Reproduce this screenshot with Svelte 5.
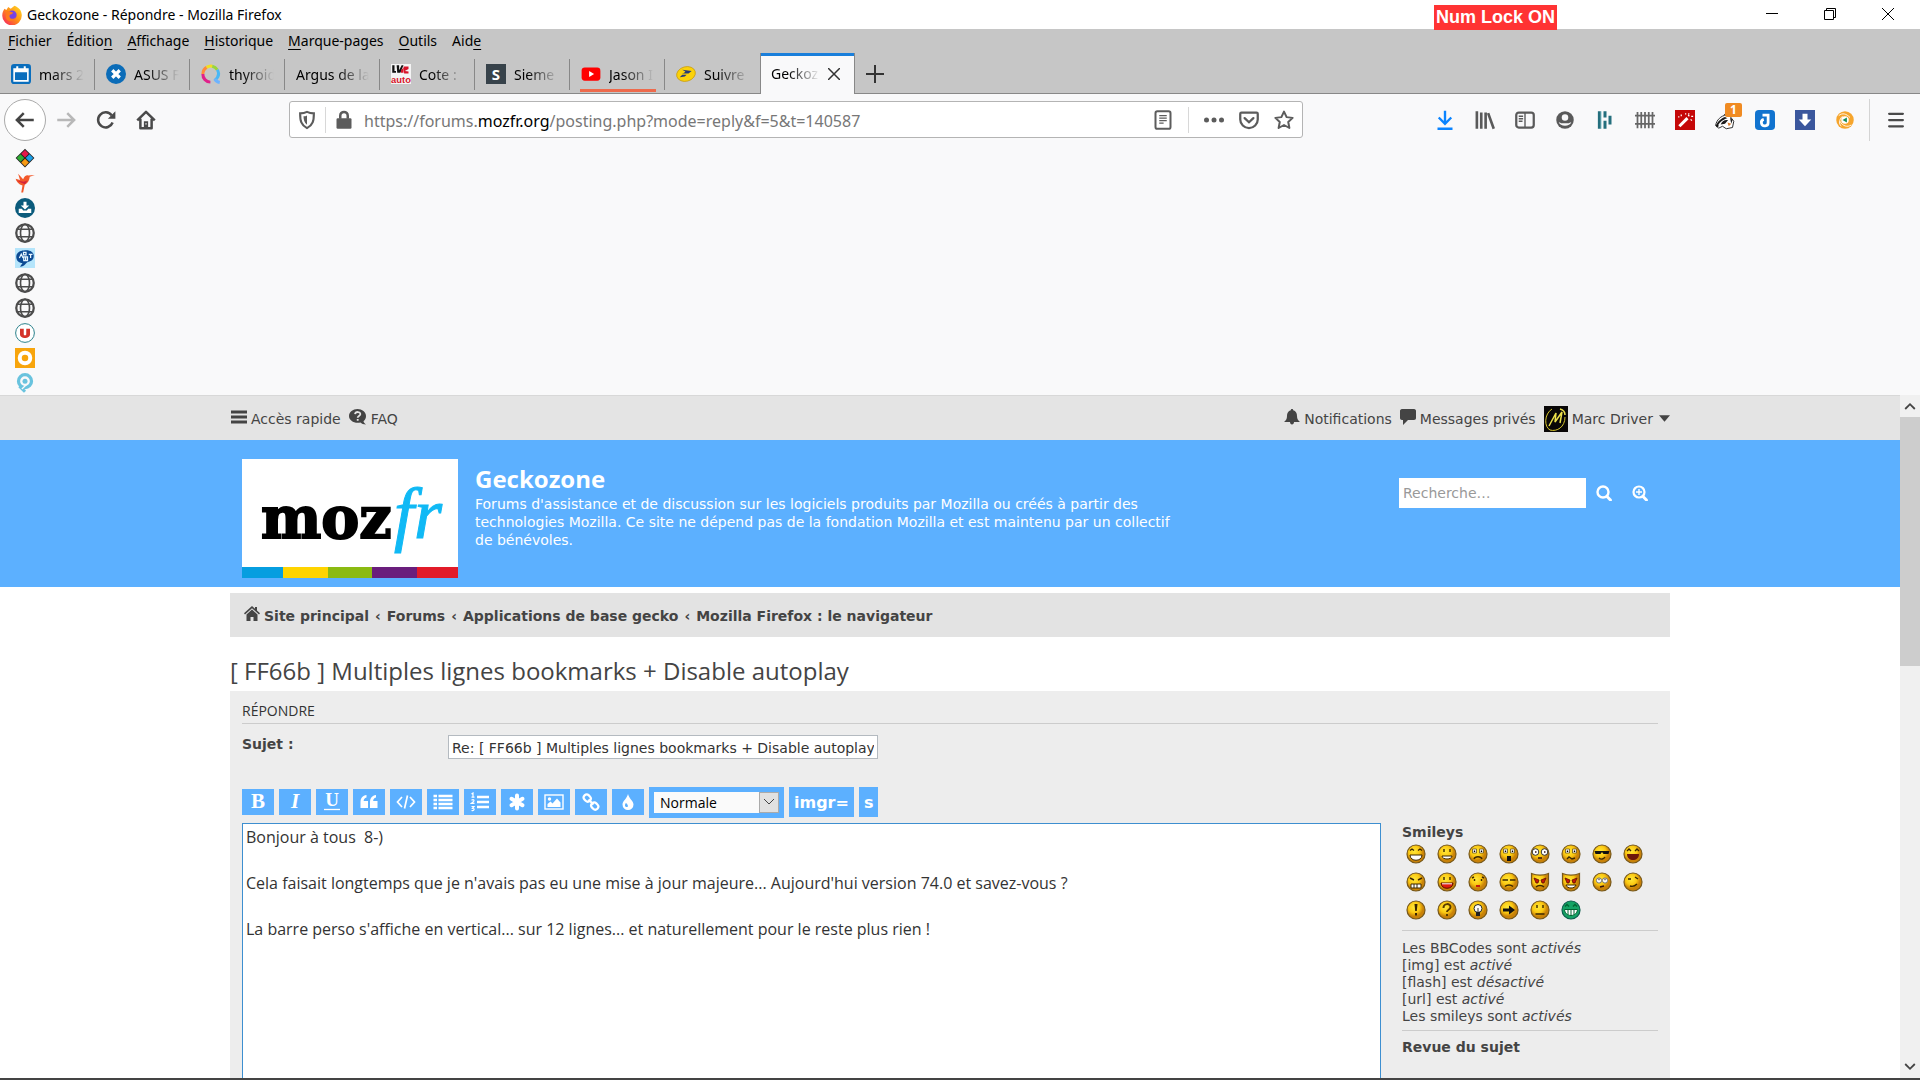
<script lang="ts">
  const globe =
    '<g fill="none" stroke="#4c4c4c"><circle cx="8" cy="8" r="7" stroke-width="1.8"/><ellipse cx="8" cy="8" rx="3.6" ry="7" stroke-width="1.3"/><path d="M2 5h12M2 11h12" stroke-width="1.2"/></g>';

  const menus = [
    ["", "F", "ichier"],
    ["Éditio", "n", ""],
    ["", "A", "ffichage"],
    ["", "H", "istorique"],
    ["", "M", "arque-pages"],
    ["", "O", "utils"],
    ["Aid", "e", ""],
  ];

  const tabs = [
    {
      title: "mars 2",
      icon: '<rect width="16" height="16" rx="2.5" fill="#0a6ebd"/><path d="M2.5 4h11v9.5h-11z" fill="none" stroke="#fff" stroke-width="1.3"/><path d="M2.5 4h11v2.6h-11z" fill="#fff"/><path d="M5 1.8v3M11 1.8v3" stroke="#fff" stroke-width="1.6"/>',
    },
    {
      title: "ASUS F",
      icon: '<circle cx="8" cy="8" r="8" fill="#0b6cb8"/><path d="M5 5l6 6M11 5l-6 6" stroke="#fff" stroke-width="2.6"/>',
    },
    {
      title: "thyroid",
      icon: '<g fill="none" stroke-width="2.4"><path d="M7.5 14.5a6.2 6.2 0 0 1-6-6.5" stroke="#e0218a"/><path d="M1.5 8a6.3 6.3 0 0 1 3-5.3" stroke="#ff8a3c"/><path d="M4.5 2.7a6.3 6.3 0 0 1 4.6-.9" stroke="#f2e01f"/><path d="M9 1.8a6.3 6.3 0 0 1 4 2.8" stroke="#9ad63a"/><path d="M13 4.6c2 3 1 6-2 8.5" stroke="#49b8f5"/><path d="M11 12c1 2 2.5 2.5 4 2.8" stroke="#6db3ff"/></g>',
    },
    { title: "Argus de la", icon: "" },
    {
      title: "Cote :",
      icon: '<rect width="16" height="16" fill="#f4f4f4"/><path d="M1 1v6h3V5.5H2.8V1zM4.5 1h2v4l2-4H10L7.5 7H5z" fill="#111"/><path d="M10 2h4v2l-3 1.5 3 .5v1.5h-3.5zM8 5l2-2v4H8z" fill="#d8142a"/><text x="8" y="14.8" font-family="Liberation Sans, sans-serif" font-size="7.5" font-weight="700" text-anchor="middle" fill="#d8142a">auto</text>',
    },
    {
      title: "Sieme",
      icon: '<rect width="16" height="16" fill="#37424a"/><text x="8" y="12.5" font-family="Open Sans, sans-serif" font-size="12" font-weight="700" text-anchor="middle" fill="#fff">S</text>',
    },
    {
      title: "Jason I",
      underline: true,
      icon: '<rect x=".5" y="2.8" width="15" height="10.5" rx="2.5" fill="#f00"/><path d="M6.5 5.6l4 2.4-4 2.4z" fill="#fff"/>',
    },
    {
      title: "Suivre",
      icon: '<ellipse cx="8" cy="8" rx="7.6" ry="5.8" transform="rotate(-15 8 8)" fill="#fbd20a" stroke="#c89b10" stroke-width=".6"/><path d="M5 4.5l7.5 1L10 7.5H4.5c2 0 2.5-1 3-1.5zM3 10.5l2-2h3.500L7 10z" fill="#253a7a"/>',
    },
  ];

  const bookmarks = [
    '<path d="M8 .5L15.5 8 8 15.5.5 8z" fill="#222"/><path d="M8 1.5l3 3-3 3-3-3z" fill="#e5194a"/><path d="M4.4 5l3 3-3 3-3-3z" fill="#2fae33"/><path d="M11.6 5l3 3-3 3-3-3z" fill="#1ba0e8"/><path d="M8 8.5l3 3-3 3-3-3z" fill="#f79a12"/>',
    '<path d="M2.5.5l4 4.5c1-2 2-3.300 4-3.100l5.300-.4-4 1.400c-.3 3-1.400 5-4 6.500L6.500 15.500H5l1-5.500C3 9 1 6.500.5 4.500l3.500 1z" fill="#f2582a"/><path d="M1 6l6 1 3-1-2 3z" fill="#d4213c"/>',
    '<circle cx="8" cy="8" r="8" fill="#0b5b7c"/><path d="M6.8 3h2.4v3h2.2L8 9.2 4.6 6h2.200zM3 8.600h2.500l1 1.400h3l1-1.400H13V12H3z" fill="#fff"/>',
    globe,
    '<rect width="16" height="16" fill="#b5e5fb"/><path d="M1 7c0-3 3-5 6-5 4-1 8 1 8 4s-1 4-4 5c-2 0-3 4-7 4l2-3C3 12 1 10 1 7z" fill="#0c4a94"/><path d="M3.5 8L5 5l1.500 3M6.800 3.500h2v2h-2zM11 5h3M12.500 5v3M7 7h3v3H7zM8.500 6.500v4" fill="none" stroke="#e8f6ff"/>',
    globe,
    globe,
    '<circle cx="8" cy="8" r="7.5" fill="#fff" stroke="#2c828c" stroke-width=".8"/><path d="M4 4.5h3V9c0 1.200 2 1.200 2 0V4.500h3V9c0 4-8 4-8 0z" fill="#d5332a"/>',
    '<rect width="16" height="16" fill="#f8a50c"/><circle cx="8" cy="8" r="4.2" fill="none" stroke="#fff" stroke-width="3.2"/>',
    '<circle cx="8" cy="6.500" r="5.200" fill="none" stroke="#69c3de" stroke-width="2.600"/><path d="M3.500 10.500L8 15" stroke="#69c3de" stroke-width="2.400"/><path d="M5.500 12.800l4-3.800" stroke="#f9f9fa"/><circle cx="8" cy="6.500" r="2" fill="#69c3de"/>',
  ];

  const navIcons: Record<string, string> = {
    back: '<path d="M15 8H2M7 2.500L1.500 8 7 13.500" fill="none" stroke="#444" stroke-width="2"/>',
    forward:
      '<path d="M1 8h13M9 2.500L14.500 8 9 13.500" fill="none" stroke="#b8b8b8" stroke-width="2"/>',
    reload:
      '<path d="M13.300 10A6 6 0 1 1 12.500 4.300" fill="none" stroke="#4a4a4a" stroke-width="2"/><path d="M15.500 1v6h-6z" fill="#4a4a4a"/>',
    home: '<path d="M1 8.300L8 1.500l7 6.800M3.500 7v7.500h9V7" fill="none" stroke="#4a4a4a" stroke-width="2" stroke-linejoin="round"/><path d="M6.300 9h3.400v5.500H6.300z" fill="#4a4a4a"/><path d="M8 10.500v1" stroke="#fff"/>',
    shield:
      '<path d="M8 1.500c2 1 4 1.200 5.500 1.200 0 6-.8 9.300-5.500 11.800C3.300 12 2.500 8.700 2.500 2.700 4 2.700 6 2.500 8 1.500z" fill="none" stroke="#5c5c5c" stroke-width="1.700"/><path d="M8 4.300v7.500C5.800 10 5.300 8 5.200 5 6.300 5 7.200 4.700 8 4.300z" fill="#5c5c5c"/>',
    lock: '<path d="M5 7V4.500a3 3 0 0 1 6 0V7" fill="none" stroke="#5c5c5c" stroke-width="2"/><rect x="2" y="6.500" width="12" height="8.500" rx="1" fill="#5c5c5c"/>',
    reader:
      '<rect x="2" y="1" width="12" height="14" rx="1.500" fill="none" stroke="#5c5c5c" stroke-width="1.600"/><path d="M5 4.500h6M5 6.500h6M5 8.500h6M5 10.500h3.500" stroke="#5c5c5c"/>',
    dots: '<g fill="#5c5c5c"><circle cx="2" cy="8" r="2"/><circle cx="8" cy="8" r="2"/><circle cx="14" cy="8" r="2"/></g>',
    pocket:
      '<path d="M2 2h12a1 1 0 0 1 1 1v4.500a7 7 0 0 1-14 0V3a1 1 0 0 1 1-1z" fill="none" stroke="#5c5c5c" stroke-width="1.800"/><path d="M4.500 6.500L8 9.800l3.500-3.300" fill="none" stroke="#5c5c5c" stroke-width="1.800" stroke-linecap="round"/>',
    star: '<path d="M8 1.300l2.100 4.400 4.800.6-3.500 3.300.9 4.800L8 12l-4.300 2.400.9-4.800L1.100 6.300l4.800-.6z" fill="none" stroke="#5c5c5c" stroke-width="1.600" stroke-linejoin="round"/>',
    menu: '<path d="M2.500 3h11M2.500 8h11M2.500 13h11" stroke="#4a4a4a" stroke-width="1.800" stroke-linecap="round"/>',
  };

  const tools = [
    {
      label: "Téléchargements",
      icon: '<path d="M8 .5v10M3 6l5 5 5-5M2 15h12" fill="none" stroke="#0a84ff" stroke-width="1.9"/>',
    },
    {
      label: "Bibliothèque",
      icon: '<path d="M1.500 1v14M5 2v13M8.500 2v13M10.500 2.500L15 15" fill="none" stroke="#5a5a5a" stroke-width="2.100"/>',
    },
    {
      label: "Panneaux latéraux",
      icon: '<rect x="1" y="2" width="14" height="12" rx="2" fill="none" stroke="#5a5a5a" stroke-width="1.8"/><path d="M8 2v12M3 5h3.500M3 7h3.500M3 9h3" stroke="#5a5a5a" stroke-width="1.100"/>',
    },
    {
      label: "Compte",
      icon: '<circle cx="8" cy="8" r="7" fill="#5a5a5a"/><circle cx="8" cy="6" r="2.600" fill="#f9f9fa"/><path d="M3 9.500c1 .5 1.500 1 2.500 1h5c1 0 1.500-.5 2.500-1-1 4-9 4-10 0z" fill="#f9f9fa"/>',
    },
    {
      label: "Historique",
      icon: '<path d="M3.500 1v14M8 1v5M8 8.500V15M12 4.500v7" fill="none" stroke="#246f7d" stroke-width="2.400"/><path d="M5 1v14" stroke="#9fd3dc" stroke-width=".7"/>',
    },
    {
      label: "Grille",
      icon: '<path d="M2 1.500v13M5 1.500v13M8 1.500v13M11 1.500v13M14 1.500v13M0 4.500h16M0 11h16" fill="none" stroke="#666" stroke-width="1.400"/>',
    },
    {
      label: "Baguette",
      icon: '<rect width="16" height="16" fill="#c50808"/><path d="M3.500 13L10 6.500" stroke="#fff" stroke-width="2.400"/><path d="M5 3.500v1.500M2.500 5.500h1M8 3h1M11 2.500v1M13 5h1.500M12.500 7.500l1 1M10.500 4l1 1" stroke="#fff"/>',
    },
    {
      label: "Privacy Badger",
      badge: "1",
      icon: '<path d="M.5 12.500C1 8 5 4.500 9 4l3 1 3 4-1 5-5 1-3-2-3 1.500z" fill="#fff" stroke="#333" stroke-width=".8"/><path d="M1 12c1-3 4-5.500 7-6.500l2 1C7 7 4 9.500 2.500 12zM4.500 11.500c1-2.500 3-4 6-3.500L8 11zM7 4l2-2 2 2.500zM12 6l2 2-1 3z" fill="#1b1b1b"/><path d="M10 10l3 1-2 2z" fill="#d67a2d"/><path d="M.5 12l2-.5.500 1.500-1.500.7z" fill="#111"/>',
    },
    {
      label: "JDownloader",
      icon: '<rect width="16" height="16" rx="3" fill="#1173cf"/><path d="M6 4h4.500v6a2.700 2.700 0 1 1-3.500-2.500" fill="none" stroke="#fff" stroke-width="2.200"/>',
    },
    {
      label: "Enregistrer",
      icon: '<rect width="16" height="16" fill="#3b579d"/><path d="M6 3h4v4.500h3L8 13 3 7.500h3z" fill="#fff"/>',
    },
    {
      label: "Capture",
      icon: '<circle cx="8" cy="8" r="7" fill="#f6a52c"/><circle cx="8" cy="8" r="3" fill="#fff"/><path d="M6 8l3.500-2v4z" fill="#188b57"/><path d="M3 4.500C6 2 9 3 12 6M13 12c-3 2-7 1-9-3M5 13c-2-2-2-5 1-8" fill="none" stroke="#fff" stroke-width=".7"/>',
    },
  ];

  const crumbs = [
    "Site principal",
    "Forums",
    "Applications de base gecko",
    "Mozilla Firefox : le navigateur",
  ];

  const formats = [
    {
      label: "Gras",
      icon: '<text x="10" y="16" font-family="Liberation Serif, serif" font-size="21" font-weight="700" text-anchor="middle" fill="#fff">B</text>',
    },
    {
      label: "Italique",
      icon: '<text x="10" y="16" font-family="Liberation Serif, serif" font-size="21" font-weight="700" font-style="italic" text-anchor="middle" fill="#fff">I</text>',
    },
    {
      label: "Souligné",
      icon: '<text x="10" y="14" font-family="Liberation Serif, serif" font-size="19" font-weight="700" text-anchor="middle" fill="#fff">U</text><path d="M2 17.500h16" stroke="#fff" stroke-width="1.300"/>',
    },
    {
      label: "Citation",
      icon: '<path d="M1.500 10c0-4 2-6.500 6-7v2.500C5.500 6 4.500 7.500 4.700 9H9v7H1.500zM11 10c0-4 2-6.500 6-7v2.500c-2 .5-3 2-2.800 3.500h4.300v7H11z" fill="#fff"/>',
    },
    {
      label: "Code",
      icon: '<path d="M6 5L1.500 10 6 15M14 5l4.500 5-4.500 5M11.500 3.500l-3 13" fill="none" stroke="#fff" stroke-width="1.700"/>',
    },
    {
      label: "Liste",
      icon: '<path d="M5.500 4h14M5.500 8h14M5.500 12h14M5.500 16h14M.5 4H4M.5 8H4M.5 12H4M.5 16H4" stroke="#fff" stroke-width="2.600"/>',
    },
    {
      label: "Liste numérotée",
      icon: '<path d="M7 5h12M7 10h12M7 15h12" stroke="#fff" stroke-width="2.600"/><path d="M1.500 2L3 1v4M1.500 5.200h3M1.500 8.300c2-1.500 3.500 0 1.500 1.700l-1.500 1.300h3M1.500 14.500h2.500l-1.500 1.800c2.500 0 2 3-1 2.200" fill="none" stroke="#fff" stroke-width="1.200"/>',
    },
    {
      label: "Élément",
      icon: '<path d="M10 3.500v13M4.500 6.800l11 6.400M15.500 6.800l-11 6.400" stroke="#fff" stroke-width="4" stroke-linecap="round"/>',
    },
    {
      label: "Image",
      icon: '<rect x="1" y="3" width="18" height="14" fill="none" stroke="#fff" stroke-width="1.400"/><circle cx="5.500" cy="7" r="1.700" fill="#fff"/><path d="M3.500 15v-3l3-2.500 2 2 4.500-5 3.500 4V15z" fill="#fff"/>',
    },
    {
      label: "Lien",
      icon: '<g fill="none" stroke="#fff" stroke-width="2.200"><rect x="2.500" y="3" width="7.500" height="6" rx="3" transform="rotate(45 6.200 6)"/><rect x="10" y="11" width="7.500" height="6" rx="3" transform="rotate(45 13.700 14)"/><path d="M7.500 7.500l5 5"/></g>',
    },
    {
      label: "Couleur",
      icon: '<path d="M10 2c1 4.500 5.500 7 5.500 10.500a5.500 5.500 0 0 1-11 0C4.500 9 9 6.500 10 2z" fill="#fff"/><path d="M8 11c-1.500 1.500-1.500 4 .8 4 1.500 0 1.700-2-.8-4z" fill="#5cb0ff"/>',
    },
  ];

  const face =
    '<circle cx="10" cy="10" r="9" fill="url(#skin)" stroke="#77581a" stroke-width="1.2"/>';
  const horned =
    '<path d="M1.500 1.500c5 2 12 2 17 0V11c0 4-4 8-8.500 8s-8.500-4-8.500-8z" fill="url(#skin)" stroke="#77581a" stroke-width="1.2"/>';
  const line = (d: string, color = "#3d2800") =>
    `<path d="${d}" fill="none" stroke="${color}" stroke-width="1.400"/>`;
  const eyes =
    '<path d="M4.500 5h4v4h-4zM11.500 5h4v4h-4z" fill="#fff" stroke="#6b5416" stroke-width=".8"/><path d="M6.500 6.500V8M13.500 6.500V8" stroke="#000" stroke-width="1.400"/>';
  const redEyes =
    '<path d="M4 6l5 2-1 3H6zM16 6l-5 2 1 3h2z" fill="#c3170a" stroke="#601000" stroke-width=".8"/>';

  const smileys = [
    [":D", face + line("M4 6.500L6 5l2 1.500M12 6.500L14 5l2 1.500") + '<path d="M4 11h12c0 7-12 7-12 0z" fill="#fff" stroke="#3d2800"/>'],
    [":)", face + line("M7 5v3M13 5v3") + '<path d="M5 12h10c0 4-10 4-10 0z" fill="#fff" stroke="#3d2800"/>'],
    [":(", face + eyes + line("M6 15c1-3 7-3 8 0")],
    [":o", face + eyes + '<rect x="8" y="12" width="4" height="5" fill="#111"/>'],
    [":shock:", face + '<g fill="#fff" stroke="#333"><circle cx="5.500" cy="8" r="3.300"/><circle cx="14.500" cy="8" r="3.300"/></g><path d="M5 8h1.500M14 8h1.500M8 14h4" stroke="#311" stroke-width="1.500"/>'],
    [":?", face + eyes + line("M6 15l2-2 3 2 3-1")],
    ["8-)", face + '<path d="M2.500 7h15l-1 3h-5L10 8l-1.500 2h-5z" fill="#111"/>' + line("M7 14c2 2 5 1 6-1")],
    [":lol:", face + line("M4 7l2-2 2 2M12 7l2-2 2 2") + '<path d="M4 10h12c0 8-12 8-12 0z" fill="#6d170b"/>'],
    [":x", face + line("M4 6l4 2M16 6l-4 2") + '<path d="M5 12h10v4H5z" fill="#fff" stroke="#3d2800"/><path d="M8 12v4M11 12v4" stroke="#3d2800"/>'],
    [":P", face + line("M7 5v3M13 5v3") + '<path d="M4 11h12c0 7-12 7-12 0z" fill="#e01b10" stroke="#5c1000"/><path d="M5 11.800h10" stroke="#fff"/>'],
    [":oops:", face + line("M6.500 7v2M13.500 7v2M4 6l2-1M16 6l-2-1") + '<path d="M8 14h4" stroke="#c41c0c" stroke-width="2"/>'],
    [":cry:", face + line("M3.500 8H9M11 8h5.500M6 14.500c2-2 6-2 8 0")],
    [":evil:", horned + redEyes + line("M6 15c2-2 6-2 8 0")],
    [":twisted:", horned + redEyes + '<path d="M5 13h10c-1 4-9 4-10 0z" fill="#fff" stroke="#3d2800"/>'],
    [":roll:", face + '<g fill="#fff" stroke="#777"><circle cx="7" cy="8.500" r="2.600"/><circle cx="13" cy="8.500" r="2.600"/></g><path d="M6.500 7.500h1M12.500 7.500h1M8 15l4-1" stroke="#311" stroke-width="1.500"/>'],
    [";)", face + line("M5 7h3M12 5l3 2M7 14c3 1 5 0 7-2")],
    [":!:", face + '<path d="M8.500 4h3l-.7 7H9.200zM9 13h2v2.500H9z" fill="#3a2500"/>'],
    [":?:", face + '<path d="M6.500 8c0-5 7-5 7-1 0 3-3.500 2.500-3.500 5M10 14v2" fill="none" stroke="#5a3c00" stroke-width="2"/>'],
    [":idea:", face + '<circle cx="10" cy="8.500" r="4" fill="#fff" stroke="#222"/><path d="M8 12h4v4H8z" fill="#222"/><path d="M10 8v4" stroke="#333"/>'],
    [":arrow:", face + '<path d="M4 8.500h6v-3l6 4.500-6 4.500v-3H4z" fill="#111"/>'],
    [":|", face + line("M7 5v3M13 5v3M5.500 14h9")],
    [":mrgreen:", '<circle cx="10" cy="10" r="9" fill="#14a365" stroke="#0b5e4c" stroke-width="1.2"/>' + line("M4 6.500l2-2 2 2M12 6.500l2-2 2 2", "#063") + '<path d="M3.500 9.500h13c-.5 8-12.500 8-13 0z" fill="#fff" stroke="#063"/><path d="M7 10v5M10 10v6M13 10v5" stroke="#063"/>'],
  ];

  const states = [
    ["Les BBCodes sont", "activés"],
    ["[img] est", "activé"],
    ["[flash] est", "désactivé"],
    ["[url] est", "activé"],
    ["Les smileys sont", "activés"],
  ];

  let subject = "Re: [ FF66b ] Multiples lignes bookmarks + Disable autoplay";
  let size = "Normale";
  let message = `Bonjour à tous  8-)

Cela faisait longtemps que je n'avais pas eu une mise à jour majeure... Aujourd'hui version 74.0 et savez-vous ?

La barre perso s'affiche en vertical... sur 12 lignes... et naturellement pour le reste plus rien !`;
</script>

<svg class="defs" width="0" height="0" aria-hidden="true">
  <defs>
    <radialGradient id="skin" cx="40%" cy="35%">
      <stop offset="0" stop-color="#ffe93a" />
      <stop offset="0.6" stop-color="#fbc912" />
      <stop offset="1" stop-color="#c98208" />
    </radialGradient>
    <linearGradient id="fox" x1="1" y1="0" x2="0" y2="1">
      <stop offset="0" stop-color="#ffe226" />
      <stop offset="0.5" stop-color="#ff8a16" />
      <stop offset="1" stop-color="#f5156c" />
    </linearGradient>
  </defs>
</svg>

<div class="window">
  <header class="titlebar">
    <svg class="icon" viewBox="0 0 16 16">
      <path d="M2 3l1.500 1L5 1.500 7 3l3-2.500c4 1.500 6 4.500 5.800 8A7.800 7.800 0 0 1 .2 8.500C.2 6 1 4.500 2 3z" fill="url(#fox)" />
      <circle cx="8" cy="8" r="3.7" fill="#7542e5" />
      <path d="M4 5c2-1 3 1 5 1-1 2-3 1-3 3s3 3 5 1c-1 4-8 4-8-1z" fill="#ff7a1c" />
    </svg>
    <span class="caption">Geckozone - Répondre - Mozilla Firefox</span>
    <span class="numlock">Num Lock ON</span>
    <div class="controls">
      <button aria-label="Réduire"><svg viewBox="0 0 12 12"><path d="M0 5.500h12" /></svg></button>
      <button aria-label="Restaurer"><svg viewBox="0 0 12 12"><path d="M.5 2.500h9v9h-9zM2.500 2.500v-2h9v9h-2" /></svg></button>
      <button aria-label="Fermer"><svg viewBox="0 0 12 12"><path d="M0 0l12 12M12 0L0 12" /></svg></button>
    </div>
  </header>

  <nav class="menubar">
    {#each menus as [before, key, after]}
      <button>{before}<u>{key}</u>{after}</button>
    {/each}
  </nav>

  <div class="tabs">
    {#each tabs as tab}
      <button class="tab" class:underline={tab.underline}>
        {#if tab.icon}
          <svg class="icon" viewBox="0 0 16 16">{@html tab.icon}</svg>
        {/if}
        <span class="label">{tab.title}</span>
      </button>
    {/each}
    <div class="tab active">
      <span class="label">Geckoz</span>
      <button class="close" aria-label="Fermer l'onglet">
        <svg viewBox="0 0 12 12"><path d="M0 0l12 12M12 0L0 12" /></svg>
      </button>
    </div>
    <button class="newtab" aria-label="Nouvel onglet">
      <svg viewBox="0 0 18 18"><path d="M9 0v18M0 9h18" /></svg>
    </button>
  </div>

  <div class="toolbar">
    <button class="round" aria-label="Précédent"><svg class="icon" viewBox="0 0 16 16">{@html navIcons.back}</svg></button>
    <button aria-label="Suivant"><svg class="icon" viewBox="0 0 16 16">{@html navIcons.forward}</svg></button>
    <button aria-label="Actualiser"><svg class="icon" viewBox="0 0 16 16">{@html navIcons.reload}</svg></button>
    <button aria-label="Accueil"><svg class="icon" viewBox="0 0 16 16">{@html navIcons.home}</svg></button>
    <div class="urlbar">
      <svg class="icon" viewBox="0 0 16 16">{@html navIcons.shield}</svg>
      <i></i>
      <svg class="icon" viewBox="0 0 16 16">{@html navIcons.lock}</svg>
      <span class="url">https://forums.<b>mozfr.org</b>/posting.php?mode=reply&amp;f=5&amp;t=140587</span>
      <svg class="icon" viewBox="0 0 16 16">{@html navIcons.reader}</svg>
      <i class="split"></i>
      <svg class="icon" viewBox="0 0 16 16">{@html navIcons.dots}</svg>
      <svg class="icon" viewBox="0 0 16 16">{@html navIcons.pocket}</svg>
      <svg class="icon" viewBox="0 0 16 16">{@html navIcons.star}</svg>
    </div>
    {#each tools as tool}
      <button aria-label={tool.label}>
        <svg class="icon" viewBox="0 0 16 16">{@html tool.icon}</svg>
        {#if tool.badge}<span class="badge">{tool.badge}</span>{/if}
      </button>
    {/each}
    <i></i>
    <button aria-label="Menu"><svg class="icon" viewBox="0 0 16 16">{@html navIcons.menu}</svg></button>
  </div>

  <div class="bookmarks">
    {#each bookmarks as icon}
      <button aria-label="Marque-page"><svg class="icon" viewBox="0 0 16 16">{@html icon}</svg></button>
    {/each}
  </div>

  <div class="viewport">
    <div class="page">
      <div class="utility">
        <div class="wrap">
          <a href="#acces">
            <svg class="fa" viewBox="0 0 16 16"><path d="M0 3h16M0 8h16M0 13h16" stroke="#444" stroke-width="2.800" /></svg>
            Accès rapide
          </a>
          <a href="#faq">
            <svg class="fa wide" viewBox="0 0 18 16">
              <path d="M8.500 0C13 0 17 3 17 7c0 2.500-1 4-2.500 5.200.3 1.300 1.200 2.300 2.500 3.300-2.500 0-4.500-.8-5.500-2-6 1.500-11.500-2-11.500-6.500C0 3 4 0 8.500 0z" fill="#444" />
              <path d="M6 5.200c.5-3 5.500-2.800 5.300 0-.1 1.800-2.600 1.800-2.600 3.500M8.700 10v1.800" fill="none" stroke="#e4e4e4" stroke-width="1.800" />
            </svg>
            FAQ
          </a>
          <span class="grow"></span>
          <a href="#notifications">
            <svg class="fa" viewBox="0 0 16 16"><path d="M8 0c.8 0 1.200.5 1.200 1.300C12 2 13 4.500 13 7c0 3 1 4.500 3 6H10c0 1.500-.8 2.500-2 2.500S6 14.500 6 13H0c2-1.500 3-3 3-6 0-2.500 1-5 3.800-5.700C6.800.5 7.200 0 8 0z" fill="#444" /></svg>
            Notifications
          </a>
          <a href="#messages">
            <svg class="fa" viewBox="0 0 16 16"><path d="M2 0h12c1.500 0 2 1 2 2v7c0 1.200-.7 2-2 2H8l-5 5v-5H2c-1.200 0-2-.8-2-2V2C0 1 .7 0 2 0z" fill="#444" /></svg>
            Messages privés
          </a>
          <a href="#profil">
            <svg class="avatar" viewBox="0 0 24 26">
              <rect width="24" height="26" fill="#090707" />
              <path d="M8 3C0 8 0 21 6 24c7 2 15-3 15-13" fill="none" stroke="#d8c62e" />
              <path d="M5 20l7-13-1 9 7-10-2 11M16 3c4 1 5 3 5 6" fill="none" stroke="#ece04a" stroke-width="1.500" />
            </svg>
            Marc Driver
            <svg class="caret" viewBox="0 0 10 6"><path d="M0 0h10L5 6z" fill="#444" /></svg>
          </a>
        </div>
      </div>

      <div class="headerbar">
        <div class="wrap">
          <a class="logo" href="#accueil" aria-label="mozfr">
            <svg viewBox="0 0 216 119">
              <rect width="216" height="108" fill="#fff" />
              <text x="19" y="79" font-family="DejaVu Serif, serif" font-size="57" font-weight="700" stroke="#000" stroke-width="2">moz</text>
              <text x="152" y="79" font-family="Liberation Serif, serif" font-size="72" font-style="italic" fill="#10b9f5" stroke="#10b9f5" stroke-width="1">fr</text>
              <path d="M0 108h41v11H0z" fill="#069ee0" />
              <path d="M41 108h45v11H41z" fill="#ffd400" />
              <path d="M86 108h44v11H86z" fill="#8bba12" />
              <path d="M130 108h45v11h-45z" fill="#6a1e7c" />
              <path d="M175 108h41v11h-41z" fill="#e21b29" />
            </svg>
          </a>
          <div class="desc">
            <h1>Geckozone</h1>
            <p>Forums d'assistance et de discussion sur les logiciels produits par Mozilla ou créés à partir des technologies Mozilla. Ce site ne dépend pas de la fondation Mozilla et est maintenu par un collectif de bénévoles.</p>
          </div>
          <form class="search">
            <input type="search" placeholder="Recherche…" aria-label="Recherche" />
            <button type="button" aria-label="Rechercher">
              <svg class="fa" viewBox="0 0 16 16"><path d="M10.500 11l5 5" stroke="#fff" stroke-width="3" /><circle cx="7" cy="7" r="5.500" fill="none" stroke="#fff" stroke-width="2.400" /></svg>
            </button>
            <button type="button" aria-label="Recherche avancée">
              <svg class="fa" viewBox="0 0 16 16"><path d="M10.500 11l5 5" stroke="#fff" stroke-width="3" /><circle cx="7" cy="7" r="5.500" fill="none" stroke="#fff" stroke-width="2.200" /><path d="M7 4v6M4 7h6" stroke="#fff" stroke-width="1.400" /></svg>
            </button>
          </form>
        </div>
      </div>

      <main class="wrap">
        <nav class="crumbs">
          <svg class="fa" viewBox="0 0 16 16"><path d="M8 0l3 2.700V1h2v3.500l3 2.800-1 1.200L8 2.200 1 8.500 0 7.300z" fill="#444" /><path d="M8 3.500l5.500 5V15h-4v-4h-3v4h-4V8.500z" fill="#444" /></svg>
          {#each crumbs as crumb, i}
            {#if i > 0}<span class="sep">‹</span>{/if}
            <a href="#forum">{crumb}</a>
          {/each}
        </nav>

        <h2>[ FF66b ] Multiples lignes bookmarks + Disable autoplay</h2>

        <form class="panel">
          <h3>Répondre</h3>
          <div class="subject">
            <label for="subject">Sujet :</label>
            <input id="subject" type="text" bind:value={subject} />
          </div>

          <div class="formats">
            {#each formats as format}
              <button type="button" aria-label={format.label}>
                <svg class="icon" viewBox="0 0 20 20">{@html format.icon}</svg>
              </button>
            {/each}
            <div class="size">
              <select bind:value={size} aria-label="Taille">
                <option>Minuscule</option>
                <option>Petite</option>
                <option>Normale</option>
                <option>Grande</option>
              </select>
              <span class="arrow"><svg viewBox="0 0 10 6"><path d="M0 0l5 5 5-5" /></svg></span>
            </div>
            <button type="button" class="text">imgr=</button>
            <button type="button" class="text">s</button>
          </div>

          <div class="editor">
            <textarea bind:value={message} aria-label="Message" spellcheck="false"></textarea>
            <aside>
              <strong>Smileys</strong>
              <div class="smileys">
                {#each smileys as [code, art]}
                  <button type="button" aria-label={code}><svg viewBox="0 0 20 20">{@html art}</svg></button>
                {/each}
              </div>
              <hr />
              <ul>
                {#each states as [text, state]}
                  <li>{text} <em>{state}</em></li>
                {/each}
              </ul>
              <hr />
              <strong class="review">Revue du sujet</strong>
            </aside>
          </div>
        </form>
      </main>
    </div>

    <div class="scrollbar">
      <svg viewBox="0 0 10 6"><path d="M1 5.500l4-4 4 4" /></svg>
      <div class="track"><div class="thumb"></div></div>
      <svg viewBox="0 0 10 6"><path d="M1 .5l4 4 4-4" /></svg>
    </div>
  </div>
  <footer></footer>
</div>

<style>
  :global(body) {
    background: #f9f9fa;
  }

  .defs {
    position: absolute;
  }

  .window {
    display: flex;
    flex-direction: column;
    height: 100vh;
    overflow: hidden;
    color: #000;
    font-family: "Noto Sans", sans-serif;
    font-size: 14px;
  }

  button {
    border: 0;
    padding: 0;
    background: none;
    color: inherit;
    font: inherit;
  }

  a {
    color: inherit;
    text-decoration: none;
  }

  svg {
    flex: none;
  }

  .icon {
    display: block;
    width: 20px;
    height: 20px;
  }

  .titlebar {
    position: relative;
    display: flex;
    align-items: center;
    gap: 5px;
    flex: none;
    height: 29px;
    padding-left: 2px;
    background: #fff;
  }

  .numlock {
    position: absolute;
    right: 363px;
    top: 5px;
    padding: 0 2px;
    background: #f33;
    color: #fff;
    font: bold 18px/25px "Liberation Sans", sans-serif;
  }

  .controls {
    display: flex;
    margin-left: auto;
    padding-right: 3px;
  }

  .controls button {
    width: 58px;
    height: 28px;
  }

  .controls svg,
  .close svg {
    width: 12px;
    height: 12px;
    fill: none;
    stroke: #000;
  }

  .menubar {
    display: flex;
    flex: none;
    gap: 15px;
    height: 24px;
    padding-left: 8px;
    background: #c6c6c6;
    line-height: 24px;
  }

  .menubar u {
    text-underline-offset: 3px;
  }

  .tabs {
    display: flex;
    flex: none;
    height: 41px;
    background: #c6c6c6;
    box-shadow: inset 0 -1px #888;
  }

  .tab {
    position: relative;
    display: flex;
    align-items: center;
    gap: 8px;
    width: 95px;
    padding: 1px 11px 0;
    box-sizing: border-box;
    text-align: left;
  }

  .tab::after {
    content: "";
    position: absolute;
    right: 0;
    top: 6px;
    height: 31px;
    border-right: 1px solid #888;
  }

  .tab:nth-child(8)::after,
  .tab.active::after {
    display: none;
  }

  .tab.underline {
    background: linear-gradient(#ee6a4c, #ee6a4c) 10px 36px / 76px 3px no-repeat;
  }

  .label {
    flex: 1;
    overflow: hidden;
    white-space: nowrap;
    mask-image: linear-gradient(to left, transparent, #000 32px);
  }

  .tab.active {
    padding: 0 14px 0 10px;
    border: solid #888;
    border-width: 0 1px;
    background: #f9f9fa;
    box-shadow: inset 0 3px #1a7fdb;
  }

  .close svg,
  .newtab svg {
    display: block;
    stroke: #333;
    stroke-width: 1.5;
  }

  .newtab {
    width: 40px;
  }

  .newtab svg {
    width: 18px;
    height: 18px;
    margin: auto;
    stroke-width: 2;
  }

  .toolbar {
    display: flex;
    align-items: center;
    flex: none;
    height: 51px;
    padding: 0 4px;
    background: #f9f9fa;
  }

  .toolbar button {
    position: relative;
    display: grid;
    place-items: center;
    width: 40px;
    height: 40px;
  }

  .toolbar button.round {
    width: 42px;
    height: 42px;
    border: 1px solid #aaa;
    border-radius: 50%;
    background: #fff;
  }

  .toolbar > i {
    width: 1px;
    height: 42px;
    margin: 0 6px 0 4px;
    background: #d4d4d4;
  }

  .badge {
    position: absolute;
    right: 3px;
    top: 3px;
    width: 17px;
    border-radius: 2px;
    background: #f08b22;
    color: #fff;
    font-size: 12px;
    font-weight: 700;
    line-height: 14px;
    text-align: center;
  }

  .urlbar {
    display: flex;
    align-items: center;
    gap: 15px;
    flex: 1;
    height: 37px;
    margin: 0 122px 0 123px;
    padding: 0 8px 0 7px;
    box-sizing: border-box;
    border: 1px solid #b4b4b4;
    border-radius: 3px;
    background: #fff;
  }

  .urlbar i {
    width: 1px;
    height: 26px;
    margin: 0 -7px;
    background: #d8d8d8;
  }

  .urlbar .split {
    margin: 0;
  }

  .url {
    flex: 1;
    margin-left: -5px;
    padding-top: 2px;
    color: #777;
    font-size: 16px;
  }

  .url b {
    color: #000;
    font-weight: 400;
  }

  .bookmarks {
    flex: none;
    width: 50px;
  }

  .bookmarks button {
    display: grid;
    place-items: center;
    width: 50px;
    height: 25px;
  }

  .viewport {
    display: flex;
    flex: 1;
    min-height: 0;
    background: #fff;
    color: #444;
    font-family: "DejaVu Sans", sans-serif;
  }

  .page {
    display: flex;
    flex-direction: column;
    flex: 1;
    min-width: 0;
  }

  .wrap {
    display: flex;
    width: 100%;
    max-width: 1440px;
    margin: 0 auto;
  }

  .fa {
    width: 16px;
    height: 16px;
  }

  .wide {
    width: 18px;
  }

  .utility {
    flex: none;
    background: #e4e4e4;
    box-shadow: inset 0 1px #d8d8d8;
  }

  .utility .wrap {
    align-items: center;
    gap: 8px;
    height: 45px;
    padding: 2px 0 0 1px;
    box-sizing: border-box;
  }

  .utility a {
    display: flex;
    align-items: center;
    gap: 4px;
  }

  .utility .fa,
  .crumbs .fa {
    margin-bottom: 4px;
  }

  .grow {
    flex: 1;
  }

  .avatar {
    width: 24px;
    height: 26px;
  }

  .caret {
    width: 11px;
    height: 7px;
    margin-left: 2px;
  }

  .headerbar {
    flex: none;
    background: #5cb0ff;
    color: #fff;
  }

  .headerbar .wrap {
    gap: 17px;
    padding: 19px 12px 9px;
    box-sizing: border-box;
  }

  .logo svg {
    display: block;
    width: 216px;
    height: 119px;
  }

  .desc {
    flex: 0 1 700px;
  }

  h1,
  h2,
  h3,
  p,
  ul {
    margin: 0;
    padding: 0;
  }

  h1 {
    margin-top: 5px;
    padding-bottom: 1px;
    font: bold 24px/30px "Open Sans", sans-serif;
  }

  p {
    line-height: 18px;
  }

  .search {
    display: flex;
    align-items: center;
    gap: 20px;
    height: 30px;
    margin: 19px 10px 0 auto;
  }

  .search input {
    width: 187px;
    height: 30px;
    margin-right: -10px;
    padding: 0 4px;
    box-sizing: border-box;
    border: 0;
    background: #fff;
    font: 14px "DejaVu Sans", sans-serif;
  }

  .search input::placeholder {
    color: #999;
  }

  .search button svg {
    display: block;
  }

  main.wrap {
    flex: 1;
    flex-direction: column;
    min-height: 0;
  }

  .crumbs {
    display: flex;
    align-items: center;
    gap: 4px;
    flex: none;
    height: 44px;
    margin-top: 6px;
    padding: 2px 14px 0;
    box-sizing: border-box;
    background: #e3e3e3;
    font-weight: 700;
  }

  .sep {
    padding: 0 2px;
  }

  h2 {
    flex: none;
    margin: 18px 0 4px;
    font: 24px/32px "Open Sans", sans-serif;
  }

  .panel {
    display: flex;
    flex-direction: column;
    flex: 1;
    min-height: 0;
    padding: 8px 12px 0;
    overflow: hidden;
    background: #ededed;
  }

  h3 {
    flex: none;
    border-bottom: 1px solid #ccc;
    color: #333;
    font: 500 14px/24px "Open Sans", sans-serif;
    text-transform: uppercase;
  }

  .subject {
    display: flex;
    flex: none;
    margin-top: 11px;
  }

  label {
    width: 206px;
    font-weight: 700;
    line-height: 18px;
  }

  .subject input {
    width: 430px;
    height: 24px;
    padding: 1px 3px 0;
    box-sizing: border-box;
    border: 1px solid #b4bac0;
    background: #fff;
    color: #333;
    font: 14px "DejaVu Sans", sans-serif;
  }

  .formats {
    display: flex;
    align-items: center;
    gap: 5px;
    flex: none;
    height: 30px;
    margin: 28px 0 6px;
    color: #fff;
  }

  .formats button {
    display: grid;
    place-items: center;
    width: 32px;
    height: 26px;
    background: #5cb0ff;
  }

  .formats button.text {
    width: auto;
    height: 30px;
    padding: 0 5px;
    font: bold 16px "DejaVu Sans", sans-serif;
  }

  .size {
    position: relative;
    padding: 5px;
    background: #5cb0ff;
  }

  select {
    display: block;
    width: 125px;
    height: 21px;
    padding: 0 26px 0 6px;
    border: 0;
    appearance: none;
    background: #fafafa;
    color: #000;
    font: 14px "Open Sans", sans-serif;
  }

  .arrow {
    position: absolute;
    right: 5px;
    top: 5px;
    display: grid;
    place-items: center;
    width: 20px;
    height: 21px;
    box-sizing: border-box;
    border: 1px solid #aaa;
    background: #e1e1e1;
    pointer-events: none;
  }

  .arrow svg {
    width: 10px;
    height: 6px;
    fill: none;
    stroke: #444;
  }

  .editor {
    display: flex;
    flex: 1;
    gap: 21px;
    min-height: 0;
  }

  textarea {
    flex: 1;
    padding: 2px 3px;
    border: 1px solid #3d8fd0;
    border-bottom: 0;
    outline: 0;
    resize: none;
    background: #fff;
    color: #333;
    font: 500 16px/23px "Open Sans", sans-serif;
  }

  aside {
    width: 256px;
  }

  strong {
    display: block;
    line-height: 18px;
  }

  .smileys {
    display: grid;
    grid-template-columns: repeat(8, 31px);
    row-gap: 8px;
    margin: 3px 0 10px;
  }

  .smileys button {
    padding-left: 4px;
    text-align: left;
  }

  .smileys svg {
    display: block;
    width: 20px;
    height: 20px;
  }

  hr {
    margin: 0;
    border: 0;
    border-top: 1px solid #ccc;
  }

  ul {
    margin: 9px 0 5px;
    list-style: none;
    line-height: 17px;
  }

  .review {
    margin-top: 7px;
  }

  .scrollbar {
    display: flex;
    flex-direction: column;
    align-items: center;
    width: 20px;
    background: #f0f0f0;
  }

  .scrollbar svg {
    width: 12px;
    height: 22px;
    fill: none;
    stroke: #444;
    stroke-width: 1.5;
  }

  .track {
    flex: 1;
    align-self: stretch;
  }

  .thumb {
    height: 39%;
    background: #cdcdcd;
  }

  footer {
    flex: none;
    height: 2px;
    background: #444;
  }
</style>
